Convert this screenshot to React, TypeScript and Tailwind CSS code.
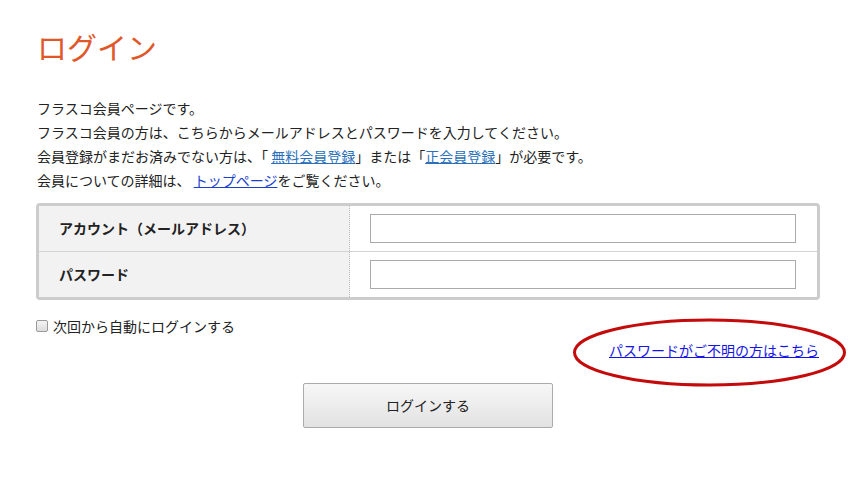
const font = { fontFamily: '"Noto Sans CJK JP", "Noto Sans", sans-serif' };

const App = () => {
  return (
    <div className="w-[860px] h-[480px] bg-white text-[#222] relative" style={font}>
      <div className="w-[784px] ml-[36px] pt-[24px]">
        <h1 className="text-[30px] leading-[45px] text-[#e0582a] pl-[1px]">ログイン</h1>

        <div className="mt-[27px] text-[14px] leading-[24px] pl-[1px]">
          <p>フラスコ会員ページです。</p>
          <p>フラスコ会員の方は、こちらからメールアドレスとパスワードを入力してください。</p>
          <p>
            会員登録がまだお済みでない方は、「 <a href="#" className="text-[#2a6fb8] underline">無料会員登録</a>」または「<a href="#" className="text-[#2a6fb8] underline">正会員登録</a>」が必要です。
          </p>
          <p>
            会員についての詳細は、 <a href="#" className="text-[#1c3fd0] underline">トップページ</a>をご覧ください。
          </p>
        </div>

        <div className="mt-[11px] border-[3px] border-[#cccccc] rounded-[4px] text-[14px]">
          <div className="flex h-[46px] border-b border-[#d4d4d4]">
            <div className="w-[311px] bg-[#f2f2f2] border-r border-dotted border-[#bbbbbb] flex items-center pl-[20px] font-bold">
              アカウント（メールアドレス）
            </div>
            <div className="flex-1 flex items-center pl-[20px] pr-[21px]">
              <input type="text" className="w-full h-[29px] border border-[#aaaaaa] outline-none" />
            </div>
          </div>
          <div className="flex h-[45px]">
            <div className="w-[311px] bg-[#f2f2f2] border-r border-dotted border-[#bbbbbb] flex items-center pl-[20px] font-bold">
              パスワード
            </div>
            <div className="flex-1 flex items-center pl-[20px] pr-[21px]">
              <input type="password" className="w-full h-[29px] border border-[#aaaaaa] outline-none" />
            </div>
          </div>
        </div>

        <label className="mt-[16px] flex items-center gap-[5px] text-[14px] leading-[20px]">
          <span className="w-[12px] h-[12px] border border-[#9a9a9a] rounded-[2px] bg-gradient-to-b from-[#f4f4f4] to-[#dcdcdc]" />
          次回から自動にログインする
        </label>

        <div className="flex justify-end mt-[4px] pr-[1px]">
          <a href="#" className="text-[14px] leading-[20px] text-[#1414e6] underline">パスワードがご不明の方はこちら</a>
        </div>

        <div className="flex justify-center mt-[23px]">
          <button className="w-[250px] h-[45px] border border-[#ababab] rounded-[2px] bg-gradient-to-b from-[#f7f7f7] to-[#e2e2e2] text-[14px] text-[#222]">
            ログインする
          </button>
        </div>
      </div>

      <svg className="absolute left-[570px] top-[316px]" width="280" height="74" viewBox="0 0 280 74">
        <ellipse cx="139.5" cy="36.5" rx="135" ry="32.5" fill="none" stroke="#c40a0a" strokeWidth="3" />
      </svg>
    </div>
  );
};

export default App;
